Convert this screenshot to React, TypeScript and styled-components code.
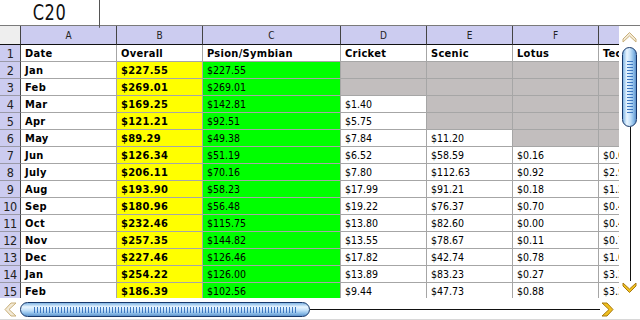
import React from "react";
import styled, { createGlobalStyle } from "styled-components";

const GlobalStyle = createGlobalStyle`
  html, body { margin: 0; padding: 0; background: #fff; overflow: hidden; }
  body { font-family: "DejaVu Sans Condensed", "DejaVu Sans", sans-serif; }
`;

const COLS = [21, 96, 86, 138, 86, 86, 86, 86];
const LETTERS = ["", "A", "B", "C", "D", "E", "F", "G"];

const GRAY = "#c2bebe";
const YELLOW = "#ffff00";
const GREEN = "#00ff00";

type Row = string[];
const rows: Row[] = [
  ["Date", "Overall", "Psion/Symbian", "Cricket", "Scenic", "Lotus", "Technical"],
  ["Jan", "$227.55", "$227.55", "", "", "", ""],
  ["Feb", "$269.01", "$269.01", "", "", "", ""],
  ["Mar", "$169.25", "$142.81", "$1.40", "", "", ""],
  ["Apr", "$121.21", "$92.51", "$5.75", "", "", ""],
  ["May", "$89.29", "$49.38", "$7.84", "$11.20", "", ""],
  ["Jun", "$126.34", "$51.19", "$6.52", "$58.59", "$0.16", "$0.04"],
  ["July", "$206.11", "$70.16", "$7.80", "$112.63", "$0.92", "$2.90"],
  ["Aug", "$193.90", "$58.23", "$17.99", "$91.21", "$0.18", "$1.20"],
  ["Sep", "$180.96", "$56.48", "$19.22", "$76.37", "$0.70", "$0.40"],
  ["Oct", "$232.46", "$115.75", "$13.80", "$82.60", "$0.00", "$0.40"],
  ["Nov", "$257.35", "$144.82", "$13.55", "$78.67", "$0.11", "$0.70"],
  ["Dec", "$227.46", "$126.46", "$17.82", "$42.74", "$0.78", "$1.00"],
  ["Jan", "$254.22", "$126.00", "$13.89", "$83.23", "$0.27", "$3.30"],
  ["Feb", "$186.39", "$102.56", "$9.44", "$47.73", "$0.88", "$3.30"],
];

// last gray (empty) row number per column index (D..G)
const GRAY_LIMITS: Record<number, number> = { 3: 3, 4: 5, 5: 6, 6: 6 };

function cellBg(r: number, c: number): string {
  if (r === 0) return "#fff";
  if (c === 1) return YELLOW;
  if (c === 2) return GREEN;
  if (GRAY_LIMITS[c] && r + 1 <= GRAY_LIMITS[c]) return GRAY;
  return "#fff";
}

const Screen = styled.div`
  width: 640px;
  height: 320px;
  display: flex;
  flex-direction: column;
  background: #fff;
  overflow: hidden;
`;

const TopBar = styled.div`
  height: 26px;
  box-sizing: border-box;
  border-bottom: 1px solid #7a7a7a;
  display: flex;
`;

const CellRef = styled.div`
  width: 100px;
  box-sizing: border-box;
  border-right: 1px solid #555;
  display: flex;
  align-items: center;
  justify-content: center;
  font-size: 18px;
  color: #111;
  letter-spacing: 0.5px;
  transform: scaleY(1.22);
`;

const FormulaField = styled.div`
  flex: 1;
`;

const Body = styled.div`
  height: 272px;
  display: flex;
`;

const Sheet = styled.div`
  width: 619px;
  overflow: hidden;
`;

const Grid = styled.div`
  display: grid;
  grid-template-columns: ${COLS.map((w) => `${w}px`).join(" ")};
  grid-auto-rows: 17px;
  grid-template-rows: 19px;
  width: max-content;
`;

const ColHead = styled.div<{ $corner?: boolean }>`
  box-sizing: border-box;
  background: ${(p) => (p.$corner ? "#eeeeee" : "#ccccf0")};
  border-right: 1px solid #444;
  border-bottom: 1px solid #111;
  font-size: 10px;
  color: #222;
  display: flex;
  align-items: center;
  justify-content: center;
  padding-top: 1px;
`;

const RowNum = styled.div`
  box-sizing: border-box;
  background: #ccccf0;
  border-right: 1px solid #444;
  border-bottom: 1px solid #9a9aa8;
  font-size: 12.5px;
  color: #222;
  display: flex;
  align-items: center;
  justify-content: center;
  white-space: nowrap;
  letter-spacing: -0.5px;
`;

const Cell = styled.div<{ $bg: string; $bold: boolean }>`
  box-sizing: border-box;
  background: ${(p) => p.$bg};
  border-right: 1px solid #a6a6a6;
  border-bottom: 1px solid #a6a6a6;
  padding-left: 4px;
  font-size: ${(p) => (p.$bold ? "11px" : "10.5px")};
  font-weight: ${(p) => (p.$bold ? 700 : 400)};
  color: #000;
  display: flex;
  align-items: center;
  white-space: nowrap;
  overflow: hidden;
  letter-spacing: ${(p) => (p.$bold ? "0.3px" : "0")};
`;

const VScroll = styled.div`
  width: 21px;
  display: flex;
  flex-direction: column;
  align-items: center;
  padding-top: 5px;
  padding-bottom: 4px;
  box-sizing: border-box;
`;

const Arrow = styled.svg`
  display: block;
  flex: none;
`;

const VThumb = styled.div`
  width: 15px;
  height: 80px;
  margin-top: 3px;
  box-sizing: border-box;
  border: 1.5px solid #17386a;
  border-radius: 8px;
  background: linear-gradient(to right, #7fb4e4 0%, #eaf6ff 30%, #c6e2fa 55%, #8cbde8 80%, #5f93cc 100%);
  display: flex;
  justify-content: center;
  align-items: center;
  flex: none;
`;

const VTicks = styled.div`
  width: 6px;
  height: 52px;
  background: repeating-linear-gradient(to bottom, #3f78c0 0 1px, transparent 1px 3px);
`;

const VTrack = styled.div`
  width: 1px;
  flex: 1;
  background: #111;
  margin-left: 1px;
`;

const HScroll = styled.div`
  height: 22px;
  display: flex;
  align-items: center;
  box-sizing: border-box;
  padding-left: 4px;
  padding-top: 2px;
  border-bottom: 1px solid #d8d8d8;
`;

const HThumb = styled.div`
  width: 290px;
  height: 15px;
  margin-left: 2px;
  box-sizing: border-box;
  border: 1.5px solid #17386a;
  border-radius: 8px;
  background: linear-gradient(to bottom, #7fb4e4 0%, #eaf6ff 30%, #c6e2fa 55%, #8cbde8 80%, #5f93cc 100%);
  display: flex;
  align-items: center;
  justify-content: center;
  flex: none;
`;

const HTicks = styled.div`
  width: 262px;
  height: 6px;
  background: repeating-linear-gradient(to right, #3f78c0 0 1px, transparent 1px 3px);
`;

const HTrack = styled.div`
  width: 290px;
  height: 1px;
  background: #111;
  flex: none;
`;

const pale = { fill: "#f3ead6", stroke: "#c9b07a" };
const gold = { fill: "#f0c020", stroke: "#a87a10" };

const UpArrow = () => (
  <Arrow width="15" height="13" viewBox="0 0 15 13">
    <path d="M1 8 L7.5 1.5 L14 8 L14 11 L7.5 5 L1 11 Z" fill={pale.fill} stroke={pale.stroke} strokeWidth="1" strokeLinejoin="round" />
  </Arrow>
);

const DownArrow = () => (
  <Arrow width="15" height="13" viewBox="0 0 15 13">
    <path d="M1 5 L7.5 11.5 L14 5 L14 2 L7.5 8 L1 2 Z" fill={gold.fill} stroke={gold.stroke} strokeWidth="1" strokeLinejoin="round" />
  </Arrow>
);

const LeftArrow = () => (
  <Arrow width="14" height="15" viewBox="0 0 14 15">
    <path d="M7 1 L1 7.5 L7 14 L12 14 L5 7.5 L12 1 Z" fill={pale.fill} stroke={pale.stroke} strokeWidth="1" strokeLinejoin="round" />
  </Arrow>
);

const RightArrow = () => (
  <Arrow width="14" height="15" viewBox="0 0 14 15">
    <path d="M7 1 L13 7.5 L7 14 L2 14 L9 7.5 L2 1 Z" fill={gold.fill} stroke={gold.stroke} strokeWidth="1" strokeLinejoin="round" />
  </Arrow>
);

export default function App() {
  return (
    <>
      <GlobalStyle />
      <Screen>
        <TopBar>
          <CellRef>C20</CellRef>
          <FormulaField />
        </TopBar>
        <Body>
          <Sheet>
            <Grid>
              {LETTERS.map((l, i) => (
                <ColHead key={`h${i}`} $corner={i === 0}>
                  {l}
                </ColHead>
              ))}
              {rows.map((row, r) => (
                <React.Fragment key={`r${r}`}>
                  <RowNum>{r + 1}</RowNum>
                  {row.map((v, c) => (
                    <Cell
                      key={`c${r}-${c}`}
                      $bg={cellBg(r, c)}
                      $bold={r === 0 || c === 0 || c === 1}
                    >
                      {v}
                    </Cell>
                  ))}
                </React.Fragment>
              ))}
            </Grid>
          </Sheet>
          <VScroll>
            <UpArrow />
            <VThumb>
              <VTicks />
            </VThumb>
            <VTrack />
            <DownArrow />
          </VScroll>
        </Body>
        <HScroll>
          <LeftArrow />
          <HThumb>
            <HTicks />
          </HThumb>
          <HTrack />
          <RightArrow />
        </HScroll>
      </Screen>
    </>
  );
}
